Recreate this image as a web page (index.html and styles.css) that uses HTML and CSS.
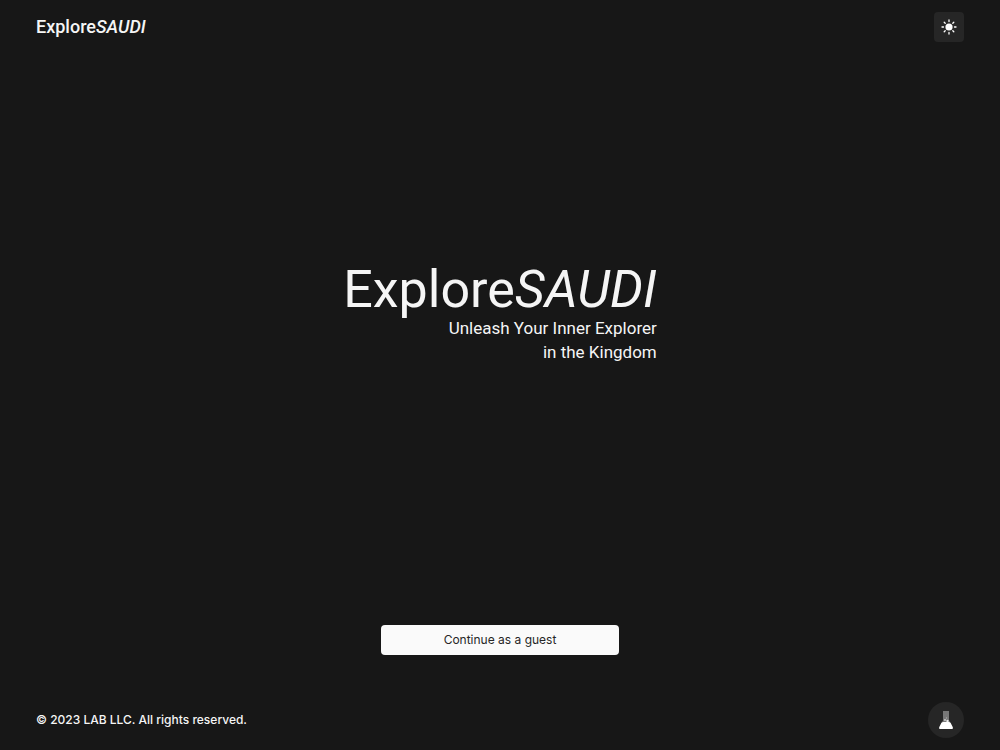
FILE: index.html
```
<!DOCTYPE html>
<html lang="en">
<head>
<meta charset="utf-8">
<meta name="viewport" content="width=device-width, initial-scale=1">
<title>ExploreSAUDI</title>
<link rel="stylesheet" href="styles.css">
</head>
<body>
<header class="topbar">
  <a class="brand" href="#">Explore<em>SAUDI</em></a>
  <button class="theme-toggle" type="button" aria-label="Switch theme">
    <svg viewBox="0 0 16 16" width="16" height="16" aria-hidden="true">
      <circle cx="8" cy="8" r="3.6" fill="currentColor"/>
      <path d="M8 1v1.500M8 13.500V15M1 8h1.500M13.500 8H15M3.200 3.200l1 1M11.800 11.800l1 1M3.200 12.800l1-1M11.800 4.200l1-1" stroke="currentColor" stroke-width="1.3" stroke-linecap="round"/>
    </svg>
  </button>
</header>
<main class="hero">
  <div class="hero-text">
    <h1 class="title">Explore<em>SAUDI</em></h1>
    <p class="tagline">Unleash Your Inner Explorer<br>in the Kingdom</p>
  </div>
</main>
<div class="actions">
  <button class="guest" type="button">Continue as a guest</button>
</div>
<footer class="footer">
  <p class="copyright">© 2023 LAB LLC. All rights reserved.</p>
  <a class="lab" href="#" aria-label="LAB">
    <svg viewBox="0 0 16 20" width="16" height="20" aria-hidden="true">
      <path d="M5 1h6v9.500l2 3H3l2-3z" fill="#777"/>
      <path d="M3.300 13q1.200-1.500 3-1h3.400q1.800-.5 3 1l2 4q.8 2-1.200 2h-11q-2 0-1.200-2z" fill="#fff"/>
      <circle cx="7" cy="10" r="1" fill="#ccc"/>
      <circle cx="9.500" cy="11" r="1.200" fill="#eee"/>
      <circle cx="8.500" cy="8" r=".7" fill="#aaa"/>
    </svg>
  </a>
</footer>
</body>
</html>
```
FILE: styles.css
```
* {
  box-sizing: border-box;
}

body {
  margin: 0;
  min-height: 100vh;
  display: flex;
  flex-direction: column;
  background: #171717;
  color: #f5f5f5;
  font-family: Inter, "Liberation Sans", sans-serif;
}

.topbar,
.footer {
  display: flex;
  align-items: center;
  justify-content: space-between;
  padding: 12px 36px;
}

.brand {
  color: inherit;
  font: 500 18px/24px Roboto, sans-serif;
  text-decoration: none;
}

.theme-toggle {
  display: grid;
  place-items: center;
  width: 30px;
  height: 30px;
  padding: 0;
  border: 0;
  border-radius: 4px;
  background: #262626;
  color: #fff;
}

.hero {
  flex: 1;
  display: grid;
  place-items: center;
  padding-bottom: 51px;
}

.hero-text {
  text-align: right;
}

.title {
  margin: 0;
  font: 400 52px/52px Roboto, sans-serif;
}

.tagline {
  margin: 0;
  font: 400 17px/24px Roboto, sans-serif;
}

.actions {
  display: flex;
  justify-content: center;
  padding: 0 36px 35px;
}

.guest {
  width: 238px;
  height: 30px;
  border: 0;
  border-radius: 4px;
  background: #fafafa;
  color: #262626;
  font: 400 12px/16px Inter, sans-serif;
}

.copyright {
  margin: 0;
  font-size: 12px;
  line-height: 16px;
  font-weight: 500;
}

.lab {
  display: grid;
  place-items: center;
  width: 36px;
  height: 36px;
  border-radius: 50%;
  background: #262626;
}
```
